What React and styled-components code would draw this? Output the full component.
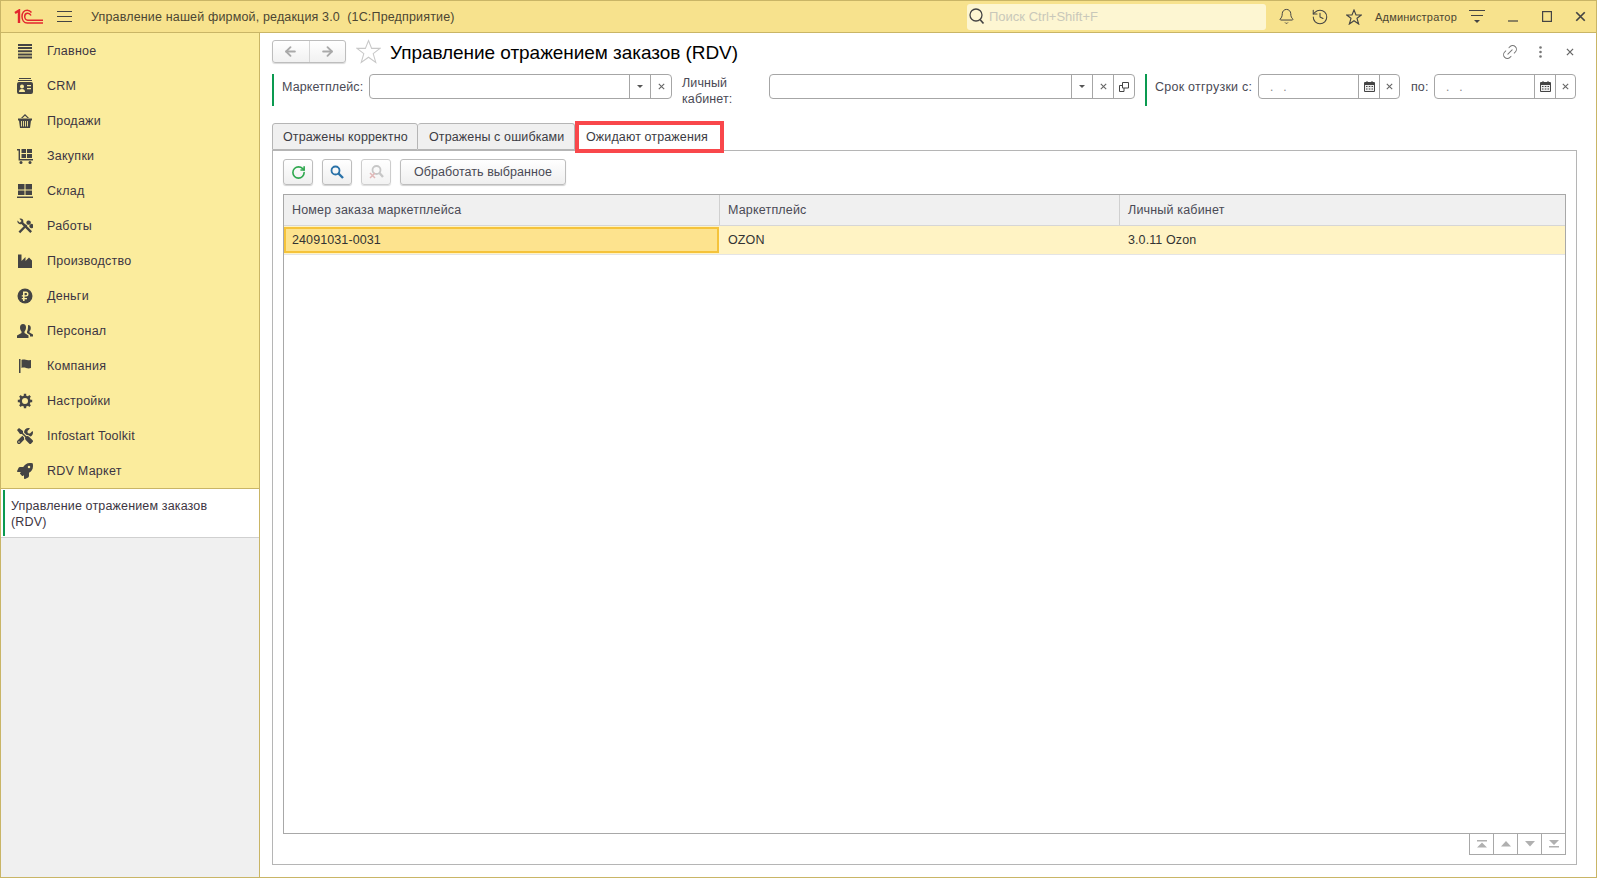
import React from 'react';
import styled, { createGlobalStyle } from 'styled-components';
import { Bell, History, RotateCw, Link2, ArrowLeft, ArrowRight } from 'lucide-react';
import { FaTools, FaRocket } from 'react-icons/fa';

const Global = createGlobalStyle`
  html, body { margin: 0; padding: 0; background: #fff; }
  * { box-sizing: border-box; }
  body { font-family: "Liberation Sans", Arial, sans-serif; font-size: 12.5px; color: #333; }
`;

const Windowed = styled.div`
  width: 1597px; height: 878px; display: flex; flex-direction: column;
  border: 1px solid #c9b566; overflow: hidden;
`;
const TitleBar = styled.header`
  height: 32px; flex: none; display: flex; align-items: center;
  background: #f7e28d; border-bottom: 1px solid #c9b566; color: #4c4632;
`;
const LogoWrap = styled.div`
  width: 44px; padding-left: 13px; display: flex; flex: none;
`;
const Burger = styled.div`
  width: 15px; height: 11px; margin: 0 19px 0 12px; flex: none;
  border-top: 1px solid #444; border-bottom: 1px solid #444; position: relative;
  &::after { content: ""; position: absolute; left: 0; right: 0; top: 4px; height: 1px; background: #444; }
`;
const AppTitle = styled.div`
  flex: 1; font-size: 12.5px; letter-spacing: .16px; white-space: pre;
`;
const SearchBox = styled.div`
  width: 299px; height: 26px; margin-right: 3px; border-radius: 3px; background: #fdf6d2;
  display: flex; align-items: center; gap: 4px; padding-left: 2px; color: #c9c8ba; font-size: 13px; flex: none;
`;
const BarIcon = styled.div`
  width: ${p => p.$w || 34}px; display: flex; justify-content: center; align-items: center; flex: none; color: #444;
`;
const UserName = styled.div`
  width: 87px; font-size: 11px; padding-left: 4px; flex: none; letter-spacing: .2px;
`;

const Body = styled.div`
  flex: 1; display: flex; min-height: 0;
`;
const Sidebar = styled.aside`
  width: 259px; flex: none; display: flex; flex-direction: column; background: #f0f0f0;
  border-right: 1px solid #c9b566;
`;
const NavList = styled.nav`
  background: #fbec9d; border-bottom: 1px solid #c9b566; height: 456px; flex: none;
`;
const NavItem = styled.div`
  height: 35px; display: flex; align-items: center; gap: 14px; padding-left: 16px;
  color: #3c3542; font-size: 12.5px; letter-spacing: .25px;
  svg { width: 16px; height: 16px; flex: none; fill: #444; }
`;
const OpenItem = styled.div`
  height: 49px; background: #fff; border-bottom: 1px solid #d0d0d0; padding: 1px 0 0 2px; flex: none;
`;
const OpenItemInner = styled.div`
  height: 46px; border-left: 2px solid #0a9a50; padding: 8px 30px 0 6px;
  font-size: 12.5px; line-height: 16px; color: #3c3542; letter-spacing: .15px;
`;

const Main = styled.main`
  flex: 1; min-width: 0; display: flex; flex-direction: column; padding: 7px 19px 12px 12px; background: #fff;
`;
const HeadRow = styled.div`
  height: 23px; flex: none; display: flex; align-items: center; margin-right: -8px;
`;
const NavPair = styled.div`
  width: 74px; height: 23px; display: flex; border: 1px solid #bdbdbd; border-radius: 3px; flex: none;
  background: linear-gradient(#fff, #f1f1f1); box-shadow: 0 1px 1px rgba(0,0,0,.15);
`;
const NavPairButton = styled.div`
  flex: 1; display: flex; align-items: center; justify-content: center; color: #a9a9a9;
  & + & { border-left: 1px solid #d5d5d5; }
`;
const StarWrap = styled.div`
  width: 44px; padding-left: 10px; display: flex; flex: none;
`;
const PageTitle = styled.h1`
  flex: 1; margin: 0; padding-top: 2px; font-size: 19px; font-weight: 400; color: #000; white-space: nowrap;
  letter-spacing: -.05px;
`;
const HeadIcon = styled.div`
  width: 30px; display: flex; justify-content: center; color: #777; flex: none;
`;

const FilterRow = styled.div`
  height: 32px; margin-top: 11px; display: flex; align-items: flex-start; flex: none;
`;
const Group = styled.div`
  display: flex; align-items: flex-start; height: 32px; margin-left: ${p => p.$ml || 0}px;
  border-left: ${p => p.$mark ? '2px solid #0a9a50' : '0'};
  padding-left: ${p => p.$mark ? 8 : 0}px;
`;
const Label = styled.label`
  width: ${p => p.$w}px; flex: none; color: #4a4a55; font-size: 12.5px; line-height: 16px; padding-top: ${p => p.$pt ?? 5}px;
  letter-spacing: ${p => p.$ls ?? .1}px; white-space: nowrap;
`;
const Field = styled.div`
  width: ${p => p.$w}px; height: 25px; flex: none; display: flex;
  border: 1px solid #a6a6a6; border-radius: 4px; background: #fff;
`;
const FieldText = styled.div`
  flex: 1; min-width: 0; padding-left: 11px; color: #888; line-height: 24px; letter-spacing: 10px; font-size: 12px;
`;
const FieldButton = styled.div`
  width: ${p => p.$w || 21}px; flex: none; display: flex; align-items: center; justify-content: center;
  border-left: 1px solid #a6a6a6; color: #555;
`;

const Tabs = styled.div`
  margin-top: 17px; height: 27px; display: flex; align-items: stretch; flex: none; position: relative; z-index: 1;
`;
const Tab = styled.div`
  width: ${p => p.$w}px; display: flex; align-items: center; padding-left: ${p => p.$first ? 10 : 11}px; white-space: nowrap;
  font-size: 12.5px; color: #3c3c44; letter-spacing: .12px;
  background: ${p => p.$active ? '#fff' : '#f0f0f0'};
  border: ${p => p.$active ? '0' : '1px solid #b5b5b5'};
  border-left-width: ${p => p.$first ? 1 : 0}px;
  border-bottom-width: ${p => p.$active ? 0 : 1}px;
  border-radius: 3px 3px 0 0;
  ${p => p.$active && 'margin: -2px 0 -3px 0; height: 32px; border-radius: 0; box-shadow: inset 0 0 0 4px #f9474b;'}
`;
const Panel = styled.section`
  flex: 1; min-height: 0; display: flex; flex-direction: column;
  border: 1px solid #b5b5b5; padding: 8px 10px 9px;
`;
const Toolbar = styled.div`
  height: 26px; display: flex; gap: 9px; flex: none;
`;
const ToolButton = styled.div`
  width: ${p => p.$w || 30}px; height: 26px; display: flex; align-items: center; justify-content: center;
  border: 1px solid #bdbdbd; border-radius: 3px; background: linear-gradient(#fff, #efefef);
  box-shadow: 0 1px 1px rgba(0,0,0,.18); color: #4a4a55; font-size: 12.5px; letter-spacing: .05px;
  opacity: ${p => p.$off ? .75 : 1};
`;
const TableBox = styled.div`
  margin-top: 9px; flex: 1; min-height: 0; border: 1px solid #a8a8a8; background: #fff;
`;
const Row = styled.div`
  display: grid; grid-template-columns: 436px 400px 1fr;
`;
const HeadRowT = styled(Row)`
  height: 31px; background: #f0f0f0; border-bottom: 1px solid #d6d6d6;
`;
const HeadCell = styled.div`
  display: flex; align-items: center; padding: 0 0 1px 8px; color: #4a4a55; letter-spacing: .18px;
  border-right: 1px solid #d0d0d0; &:last-child { border-right: 0; }
`;
const DataRow = styled(Row)`
  height: 29px; background: #fff3c4; border-bottom: 1px solid #e4e4e4; color: #333;
`;
const DataCell = styled.div`
  display: flex; align-items: center; padding-left: ${p => p.$sel ? 6 : 8}px; letter-spacing: .1px;
  background: ${p => p.$sel ? '#fde38e' : 'transparent'};
  border: ${p => p.$sel ? '2px solid #f5c33b' : '0'};
  margin: ${p => p.$sel ? '1px 1px 1px 0' : '0'};
`;
const Pager = styled.div`
  align-self: flex-end; display: flex; width: 97px; height: 21px; flex: none;
  border: 1px solid #a8a8a8; border-top: 0;
`;
const PagerCell = styled.div`
  flex: 1; display: flex; align-items: center; justify-content: center; 
  & + & { border-left: 1px solid #a8a8a8; }
`;

const Logo = () => (
  <svg width="29" height="15" viewBox="0 0 29 15" fill="none">
    <path d="M1 4 5 1.500V14" stroke="#e3262e" strokeWidth="2.400" />
    <path d="M17.500 3.500C16.300 2 15 1.200 13.300 1.200 10 1.200 8 4 8 7.500s2 6.500 5.300 6.500H29" stroke="#e3262e" strokeWidth="1.500" />
    <path d="M17 6.500C16.300 5 15 4.200 13.500 4.300 11.800 4.400 10.700 5.700 10.700 7.500s1.300 3.700 3 3.700H29" stroke="#e3262e" strokeWidth="1.500" />
  </svg>
);
const StarShape = ({ s, c, w = 1 }) => (
  <svg width={s} height={s} viewBox="0 0 24 24" fill="none"><path d="M12 1.500 15 9h8l-6.500 5 2.500 8.500-7-5-7 5L7.500 14 1 9h8z" stroke={c} strokeWidth={w} strokeLinejoin="miter" /></svg>
);
const IHome = () => <svg viewBox="0 0 16 16"><path d="M1 1h14v2H1zM1 4h14v2H1zM1 7.200h14v2H1zM1 10.400h14v2H1zM1 13.500h14v2H1z" /></svg>;
const ICrm = () => <svg viewBox="0 0 16 16"><path d="M2 0h12v1H2zM1 2h14v1H1z" /><rect y="4" width="16" height="12" rx="2" /><circle cx="5" cy="8.500" r="2" fill="#fbec9d" /><path d="M2 14c0-2 1-3 3-3s3 1 3 3zM10 7h4v1.300h-4zM10 10h4v1.300h-4z" fill="#fbec9d" /></svg>;
const ISales = () => <svg viewBox="0 0 16 16"><path d="M4 5 8 1l4 4h-1.600L8 2.800 5.600 5z" /><path d="M1 5.500h14v2h-1l-1 7.500H3L2 7.500H1z" /><path d="M4.500 8v5.500M6.500 8v5.500M8.500 8v5.500M10.500 8v5.500" stroke="#fbec9d" strokeWidth=".9" /></svg>;
const IPurchase = () => <svg viewBox="0 0 16 16"><path d="M0 1h3v10h13v1.400H1.600V2.400H0z" /><path d="M4.500 1H9v4H4.500zM10 1h5v4h-5zM4.500 6H9v4H4.500zM10 6h5v4h-5z" /><circle cx="4" cy="14.500" r="1.500" /><circle cx="13" cy="14.500" r="1.500" /></svg>;
const IStock = () => <svg viewBox="0 0 16 16"><path d="M1 1h6.500v5.500H1zM8.500 1H15v5.500H8.500zM1 7.500h6.500V12H1zM8.500 7.500H15V12H8.500zM0 13.500h16V15H0z" /></svg>;
const IWork = () => <svg viewBox="0 0 16 16"><path d="M.5 2.500 2.800 4.700 4.600 3 2.400.8C4.800-.2 7 1.800 6.200 4.200l8.800 9-1.700 1.700L4.400 6C2.200 6.900-.2 5 .5 2.500z" /><path d="M1.500 13.500 8.800 6.300 10.300 7.800 3.200 15.300zM9.700 3.500a2.200 2.200 0 1 1 3 3 2.200 2.200 0 0 1-3-3zM12.500 7.200a2.200 2.200 0 1 1 2.500 3A2.200 2.200 0 0 1 12.500 7.200z" /></svg>;
const IFactory = () => <svg viewBox="0 0 16 16"><path d="M1 15V1.500h3.500V8l4-4v4l3.500-3.500 3 3V15z" /></svg>;
const IMoney = () => <svg viewBox="0 0 16 16"><circle cx="8" cy="8" r="7.500" /><path d="M6 3.500h3a2.500 2.500 0 0 1 0 5H7.600V10H10v1.300H7.600V13H6v-1.700H4.800V10H6V8.500H4.800V7.200H6zM7.600 5v2.200H9A1.100 1.100 0 0 0 9 5z" fill="#fbec9d" /></svg>;
const IPeople = () => <svg viewBox="0 0 16 16"><path d="M6 1c2 0 3 1.500 3 3.500S8 8 7.500 8.500V10l4 2.500V15H0v-2.500L4.500 10V8.500C4 8 3 6.500 3 4.500S4 1 6 1z" /><path d="M11 2c1.800 0 2.800 1.200 2.800 3s-.8 2.800-1.300 3.300V9.500l3.500 2v2h-3v-1.500l-3-2V8.500c.8-1 1.200-4 1-6.500z" /></svg>;
const IFlag = () => <svg viewBox="0 0 16 16"><path d="M2 1h1.500v14H2z" /><path d="M4.500 2c3-1.400 4.500 1 9 0 .6 0 .5.200.5.500V10c-4 1.300-6-1.300-9.500 0z" /></svg>;
const IGear = () => (
  <svg viewBox="0 0 16 16">
    <circle cx="8" cy="8" r="4.300" fill="none" stroke="#444" strokeWidth="2.600" />
    <path d="M6.800.800h2.400v3H6.800zM6.800 12.200h2.400v3H6.800zM.800 6.800h3v2.400h-3zM12.200 6.800h3v2.400h-3z" />
    <path d="M6.800.800h2.400v3H6.800zM6.800 12.200h2.400v3H6.800zM.800 6.800h3v2.400h-3zM12.200 6.800h3v2.400h-3z" transform="rotate(45 8 8)" />
  </svg>
);

const Close = ({ s = 7, c = '#666' }) => (
  <svg width={s} height={s} viewBox="0 0 7 7"><path d="M.8.800l5.400 5.400M6.200.800.8 6.200" stroke={c} strokeWidth="1.100" fill="none" /></svg>
);
const Caret = () => <svg width="6" height="3" viewBox="0 0 6 3"><path d="M0 0h6L3 3z" fill="#555" /></svg>;
const Copy = () => <svg width="10" height="10" viewBox="0 0 10 10" fill="none" stroke="#444"><path d="M3.500.500h6v5.500h-6zM3.500 3.500H.500v6H5V6" /></svg>;
const Calendar = () => <svg width="11" height="11" viewBox="0 0 11 11"><path d="M1 1h9a1 1 0 0 1 1 1v8a1 1 0 0 1-1 1H1a1 1 0 0 1-1-1V2a1 1 0 0 1 1-1z" fill="#444" /><path d="M1 4h9v6H1z" fill="#eee" /><path d="M2 5h1.500v1H2zM4.800 5h1.500v1H4.800zM7.500 5H9v1H7.500zM2 7.500h1.500v1H2zM4.800 7.500h1.500v1H4.800zM7.500 7.500H9v1H7.500z" fill="#444" /><path d="M2.500 0h1v2h-1zM7.500 0h1v2h-1z" fill="#444" /></svg>;
const SearchBlue = ({ s = 14, c = '#2a72a8' }) => <svg width={s} height={s} viewBox="0 0 14 14" fill="none" stroke={c}><circle cx="5.500" cy="5.500" r="4" strokeWidth="1.800" /><path d="M8.500 8.500 13 13" strokeWidth="2.400" /></svg>;
const SearchThin = () => <svg width="16" height="17" viewBox="0 0 16 17" fill="none" stroke="#444"><circle cx="7" cy="7" r="6" strokeWidth="1.300" /><path d="M11 11.500 14.500 15.500" strokeWidth="1.600" /></svg>;
const SearchOff = () => <svg width="16" height="16" viewBox="0 0 16 16" fill="none"><circle cx="8.500" cy="6" r="4" stroke="#b5b5b5" strokeWidth="1.800" /><path d="M11.500 9 15 13" stroke="#b5b5b5" strokeWidth="2.400" /><path d="M2 9l5 5M7 9l-5 5" stroke="#d8a0a0" strokeWidth="1.500" /></svg>;
const Filt = () => <svg width="18" height="15" viewBox="0 0 18 15" fill="none"><path d="M1 1.500h16M3 6.500h12" stroke="#444" strokeWidth="1.100" /><path d="M6 11h6l-3 3z" fill="#444" /></svg>;
const Dots = () => <svg width="3" height="12" viewBox="0 0 3 12"><circle cx="1.500" cy="1.500" r="1.300" fill="#777" /><circle cx="1.500" cy="6" r="1.300" fill="#777" /><circle cx="1.500" cy="10.500" r="1.300" fill="#777" /></svg>;
const PagerIcon = ({ kind }) => {
  const d = {
    first: 'M0 0h10v1.500H0zM5 2.500 10 7.500H0z',
    prev: 'M5 1 10 6.500H0z',
    next: 'M0 1h10L5 6.500z',
    last: 'M0 0h10L5 5zM0 6h10v1.500H0z',
  }[kind];
  return <svg width="10" height="8" viewBox="0 0 10 8"><path d={d} fill="#b0b0b0" /></svg>;
};

const nav = [
  ['Главное', IHome], ['CRM', ICrm], ['Продажи', ISales], ['Закупки', IPurchase], ['Склад', IStock],
  ['Работы', IWork], ['Производство', IFactory], ['Деньги', IMoney], ['Персонал', IPeople], ['Компания', IFlag],
  ['Настройки', IGear], ['Infostart Toolkit', FaTools], ['RDV Маркет', FaRocket],
];

export default function App() {
  return (
    <Windowed>
      <Global />
      <TitleBar>
        <LogoWrap><Logo /></LogoWrap>
        <Burger />
        <AppTitle>Управление нашей фирмой, редакция 3.0  (1С:Предприятие)</AppTitle>
        <SearchBox><SearchThin />Поиск Ctrl+Shift+F</SearchBox>
        <BarIcon><Bell size={17} strokeWidth={1.4} /></BarIcon>
        <BarIcon><History size={18} strokeWidth={1.4} /></BarIcon>
        <BarIcon><StarShape s={16} c="#444" w={1.7} /></BarIcon>
        <UserName>Администратор</UserName>
        <BarIcon $w={38}><Filt /></BarIcon>
        <BarIcon $w={34}><svg width="10" height="10" viewBox="0 0 10 10"><path d="M0 9h10" stroke="#444" strokeWidth="1.200" /></svg></BarIcon>
        <BarIcon $w={34}><svg width="10" height="11" viewBox="0 0 10 11"><rect x=".6" y=".6" width="8.800" height="9.800" fill="none" stroke="#444" strokeWidth="1.200" /></svg></BarIcon>
        <BarIcon $w={32}><Close s={11} c="#444" /></BarIcon>
      </TitleBar>
      <Body>
        <Sidebar>
          <NavList>
            {nav.map(([t, I]) => <NavItem key={t}><I />{t}</NavItem>)}
          </NavList>
          <OpenItem><OpenItemInner>Управление отражением заказов (RDV)</OpenItemInner></OpenItem>
        </Sidebar>
        <Main>
          <HeadRow>
            <NavPair>
              <NavPairButton><ArrowLeft size={15} strokeWidth={3} /></NavPairButton>
              <NavPairButton><ArrowRight size={15} strokeWidth={3} /></NavPairButton>
            </NavPair>
            <StarWrap><StarShape s={25} c="#c8c8c8" /></StarWrap>
            <PageTitle>Управление отражением заказов (RDV)</PageTitle>
            <HeadIcon><Link2 size={18} strokeWidth={1.3} style={{ transform: 'rotate(-45deg)' }} /></HeadIcon>
            <HeadIcon><Dots /></HeadIcon>
            <HeadIcon><Close s={8} /></HeadIcon>
          </HeadRow>
          <FilterRow>
            <Group $mark>
              <Label $w={87}>Маркетплейс:</Label>
              <Field $w={303}><FieldText /><FieldButton><Caret /></FieldButton><FieldButton><Close /></FieldButton></Field>
            </Group>
            <Group $ml={10}>
              <Label $w={87} $pt={1}>Личный<br />кабинет:</Label>
              <Field $w={366}><FieldText /><FieldButton><Caret /></FieldButton><FieldButton><Close /></FieldButton><FieldButton><Copy /></FieldButton></Field>
            </Group>
            <Group $mark $ml={10}>
              <Label $w={103} $ls={.25}>Срок отгрузки с:</Label>
              <Field $w={142}><FieldText>..</FieldText><FieldButton><Calendar /></FieldButton><FieldButton $w={20}><Close /></FieldButton></Field>
            </Group>
            <Group $ml={11}>
              <Label $w={23}>по:</Label>
              <Field $w={142}><FieldText>..</FieldText><FieldButton><Calendar /></FieldButton><FieldButton $w={20}><Close /></FieldButton></Field>
            </Group>
          </FilterRow>
          <Tabs>
            <Tab $first $w={146}>Отражены корректно</Tab>
            <Tab $w={157}>Отражены с ошибками</Tab>
            <Tab $active $w={149}>Ожидают отражения</Tab>
          </Tabs>
          <Panel>
            <Toolbar>
              <ToolButton><RotateCw size={15} color="#2fa84f" strokeWidth={2.6} /></ToolButton>
              <ToolButton><SearchBlue /></ToolButton>
              <ToolButton $off><SearchOff /></ToolButton>
              <ToolButton $w={166}>Обработать выбранное</ToolButton>
            </Toolbar>
            <TableBox>
              <HeadRowT>
                <HeadCell>Номер заказа маркетплейса</HeadCell>
                <HeadCell>Маркетплейс</HeadCell>
                <HeadCell>Личный кабинет</HeadCell>
              </HeadRowT>
              <DataRow>
                <DataCell $sel>24091031-0031</DataCell>
                <DataCell>OZON</DataCell>
                <DataCell>3.0.11 Ozon</DataCell>
              </DataRow>
            </TableBox>
            <Pager>
              <PagerCell><PagerIcon kind="first" /></PagerCell>
              <PagerCell><PagerIcon kind="prev" /></PagerCell>
              <PagerCell><PagerIcon kind="next" /></PagerCell>
              <PagerCell><PagerIcon kind="last" /></PagerCell>
            </Pager>
          </Panel>
        </Main>
      </Body>
    </Windowed>
  );
}
